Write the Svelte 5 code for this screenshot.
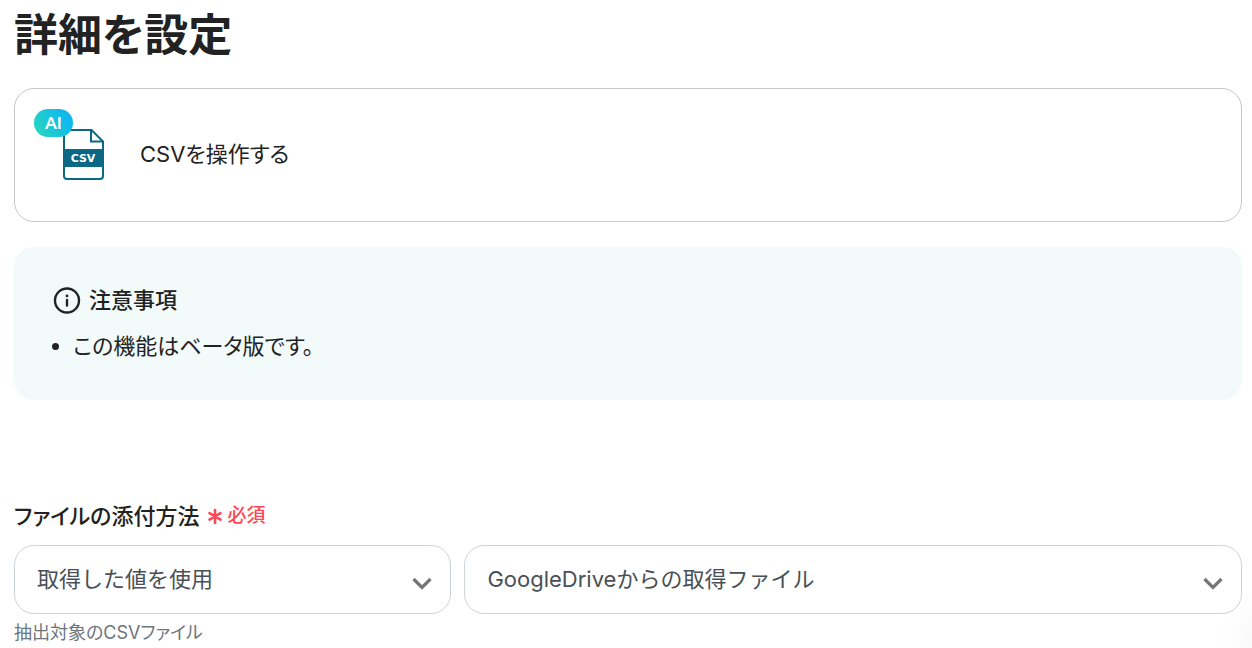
<script lang="ts">
	const notices = ['この機能はベータ版です。'];
	const methods = ['取得した値を使用', 'ファイルをアップロード'];
	const files = ['GoogleDriveからの取得ファイル'];

	let method = $state(methods[0]);
	let file = $state(files[0]);
</script>

{#snippet chevron()}
	<svg class="chevron" width="20" height="13" viewBox="0 0 20 13" fill="none" aria-hidden="true">
		<path d="M1.5 2l8.5 8.5L18.5 2" stroke="#757575" stroke-width="3.2" />
	</svg>
{/snippet}

<main>
	<h1>詳細を設定</h1>

	<section class="operation">
		<div class="operation-icon">
			<svg width="41" height="51" viewBox="0 0 41 51" fill="none" aria-hidden="true">
				<path
					d="M1 4a3 3 0 0 1 3-3h24.5L40 12.5V47a3 3 0 0 1-3 3H4a3 3 0 0 1-3-3z"
					stroke="#0b6885"
					stroke-width="2"
				/>
				<path d="M28 1v11.5h12" stroke="#0b6885" stroke-width="2" />
				<path d="M1 20h39v18H1z" fill="#0b6885" />
				<text x="20" y="33" text-anchor="middle">CSV</text>
			</svg>
			<span class="ai-badge">AI</span>
		</div>
		<p>CSVを操作する</p>
	</section>

	<section class="notice">
		<h2>
			<svg width="28" height="28" viewBox="0 0 28 28" fill="none" aria-hidden="true">
				<circle cx="14" cy="14.5" r="12" stroke="#222" stroke-width="2.4" />
				<circle cx="14" cy="9.9" r="1.4" fill="#222" />
				<path d="M14 14v5.5" stroke="#222" stroke-width="2.4" stroke-linecap="round" />
			</svg>
			注意事項
		</h2>
		<ul>
			{#each notices as notice}
				<li>{notice}</li>
			{/each}
		</ul>
	</section>

	<div class="field">
		<div class="field-label">
			<label for="method">ファイルの添付方法</label>
			<span class="required">
				<svg width="16" height="16" viewBox="0 0 16 16" fill="none" aria-hidden="true">
					<path
						d="M8 2v13M2.5 5.2l11 6.4M2.5 11.6l11-6.4"
						stroke="#ff4757"
						stroke-width="2.6"
						stroke-linecap="round"
					/>
				</svg>
				必須
			</span>
		</div>
		<div class="selects">
			<div class="select">
				<select id="method" bind:value={method}>
					{#each methods as item}
						<option>{item}</option>
					{/each}
				</select>
				{@render chevron()}
			</div>
			<div class="select">
				<select aria-label="ファイル" aria-describedby="file-help" bind:value={file}>
					{#each files as item}
						<option>{item}</option>
					{/each}
				</select>
				{@render chevron()}
			</div>
		</div>
		<p class="help" id="file-help">抽出対象のCSVファイル</p>
	</div>
</main>

<div class="corner-shade"></div>

<style>
	:global(body) {
		background: #fff;
		color: #222;
		font-family: Inter, 'Noto Sans CJK JP', sans-serif;
		font-size: 22px;
		line-height: 32px;
		font-feature-settings: 'palt';
	}

	main {
		padding: 3px 10px 4px 14px;
	}

	h1,
	h2,
	p,
	ul {
		margin: 0;
	}

	h1 {
		font-size: 44px;
		line-height: 64px;
		font-weight: 700;
	}

	.operation {
		display: flex;
		align-items: center;
		gap: 36px;
		min-height: 92px;
		margin-top: 21px;
		padding: 19px 48px 21px;
		border: 1px solid #c8c8c8;
		border-radius: 20px;
	}

	.operation-icon {
		position: relative;
		display: flex;
	}

	.operation-icon text {
		fill: #fff;
		font-family: 'DejaVu Sans', sans-serif;
		font-size: 11px;
		font-weight: 700;
	}

	.ai-badge {
		position: absolute;
		top: -20px;
		left: -29px;
		width: 39px;
		border-radius: 14px;
		background: linear-gradient(60deg, #2bd9bb, #0fb8ee 80%);
		color: #fff;
		font-family: Lato, sans-serif;
		font-size: 17px;
		line-height: 28px;
		font-weight: 700;
		text-align: center;
	}

	.notice {
		margin-top: 25px;
		padding: 37px 39px 38px;
		border-radius: 20px;
		background: #f2fafa;
	}

	h2 {
		display: flex;
		align-items: center;
		gap: 8px;
		font-size: 22px;
		font-weight: 500;
	}

	ul {
		margin-top: 14px;
		padding-left: 20px;
	}

	.field {
		margin-top: 100px;
	}

	.field-label {
		display: flex;
		align-items: center;
		gap: 8px;
		font-weight: 500;
	}

	.required {
		display: flex;
		align-items: center;
		gap: 4px;
		color: #ff4757;
		font-size: 19px;
	}

	.selects {
		display: grid;
		grid-template-columns: 9fr 16fr;
		gap: 13px;
		margin-top: 13px;
	}

	.select {
		position: relative;
	}

	select {
		width: 100%;
		height: 69px;
		padding: 0 56px 2px 22px;
		appearance: none;
		border: 1px solid #ced4da;
		border-radius: 20px;
		background: #fff;
		color: #495057;
		font: inherit;
		font-feature-settings: normal;
	}

	.chevron {
		position: absolute;
		top: 32px;
		right: 19px;
		pointer-events: none;
	}

	.help {
		margin-top: 7px;
		color: #6c757d;
		font-size: 18px;
		line-height: 24px;
	}

	.corner-shade {
		position: fixed;
		right: -60px;
		bottom: -60px;
		width: 60px;
		height: 90px;
		box-shadow: 0 0 50px rgba(0, 0, 0, 0.06);
		pointer-events: none;
	}
</style>
